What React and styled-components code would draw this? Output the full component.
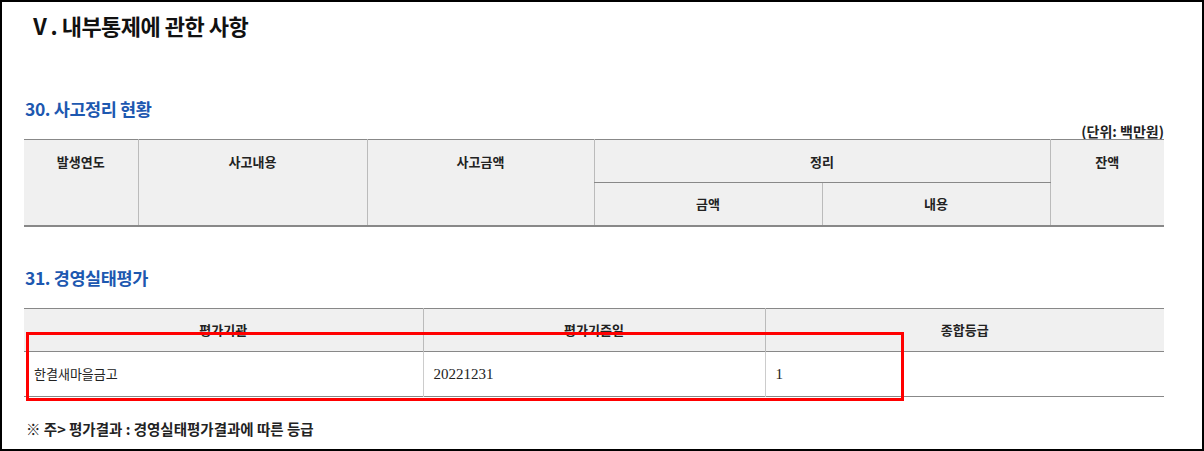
import React from 'react';
import styled, { createGlobalStyle } from 'styled-components';

const GlobalStyle = createGlobalStyle`
  html, body {
    margin: 0;
    padding: 0;
    background: #ffffff;
  }
  body {
    font-family: "Noto Sans CJK KR", "Noto Sans", sans-serif;
    color: #222;
  }
`;

const Frame = styled.div`
  box-sizing: border-box;
  width: 1204px;
  height: 451px;
  border: 2px solid #000;
  padding: 9px 38px 0 22px;
  overflow: hidden;
`;

const PageTitle = styled.h1`
  margin: 0 0 0 5px;
  font-size: 22px;
  line-height: 28px;
  font-weight: 700;
  color: #111;
  letter-spacing: -0.5px;
`;

const SectionTitle = styled.h2`
  margin: ${(p) => p.$top}px 0 0 1px;
  font-size: 17.5px;
  line-height: 24px;
  font-weight: 700;
  color: #1d58b0;
  letter-spacing: -0.4px;
`;

const Unit = styled.div`
  margin-top: 2px;
  text-align: right;
  font-size: 14px;
  line-height: 16px;
  font-weight: 700;
  color: #222;
`;

const TableWrap = styled.div`
  position: relative;
  margin-top: ${(p) => p.$top || 0}px;
`;

const Table = styled.table`
  width: 1140px;
  border-collapse: collapse;
  table-layout: fixed;
  border-top: 1px solid #888;
  border-bottom: ${(p) => p.$bottom || 1}px solid #888;
`;

const Th = styled.th`
  box-sizing: border-box;
  height: ${(p) => p.$h}px;
  padding: ${(p) => p.$pad || 11}px 4px 0;
  vertical-align: top;
  background: #f0f0f0;
  font-size: 13px;
  line-height: 20px;
  font-weight: 700;
  color: #222;
  text-align: center;
  border-left: 1px solid #bbb;
  border-bottom: ${(p) => (p.$split ? '1px solid #888' : 'none')};

  &:first-child {
    border-left: none;
  }
`;

const Td = styled.td`
  box-sizing: border-box;
  height: 45px;
  padding: 0 10px;
  vertical-align: middle;
  font-family: ${(p) =>
    p.$num ? '"Liberation Serif", "Noto Sans CJK KR", serif' : '"Noto Sans CJK KR", sans-serif'};
  font-size: ${(p) => (p.$num ? 15 : 13)}px;
  line-height: 20px;
  color: #222;
  border-left: 1px solid #ccc;
  border-top: 1px solid #888;

  &:first-child {
    border-left: none;
  }
`;

const Highlight = styled.div`
  position: absolute;
  left: 2px;
  top: 24px;
  width: 878px;
  height: 69px;
  box-sizing: border-box;
  border: 3px solid #ff0000;
  pointer-events: none;
`;

const Note = styled.p`
  margin: 23px 0 0 2px;
  font-size: 14.5px;
  line-height: 18px;
  font-weight: 700;
  color: #222;
`;

const accidentCols = [114, 229, 227, 228, 228, 114];
const ratingCols = [399, 342, 399];

const ratings = [{ org: '한결새마을금고', date: '20221231', grade: '1' }];

export default function App() {
  return (
    <>
      <GlobalStyle />
      <Frame>
        <PageTitle>Ⅴ. 내부통제에 관한 사항</PageTitle>

        <SectionTitle $top={58}>30. 사고정리 현황</SectionTitle>
        <Unit>(단위: 백만원)</Unit>
        <TableWrap>
          <Table $bottom={2}>
            <colgroup>
              {accidentCols.map((w, i) => (
                <col key={i} style={{ width: w }} />
              ))}
            </colgroup>
            <thead>
              <tr>
                <Th rowSpan={2} $h={86} $pad={12}>발생연도</Th>
                <Th rowSpan={2} $h={86} $pad={12}>사고내용</Th>
                <Th rowSpan={2} $h={86} $pad={12}>사고금액</Th>
                <Th colSpan={2} $h={43} $pad={12} $split>정리</Th>
                <Th rowSpan={2} $h={86} $pad={12}>잔액</Th>
              </tr>
              <tr>
                <Th $h={43} style={{ borderLeft: '1px solid #bbb' }}>금액</Th>
                <Th $h={43}>내용</Th>
              </tr>
            </thead>
          </Table>
        </TableWrap>

        <SectionTitle $top={39}>31. 경영실태평가</SectionTitle>
        <TableWrap $top={18}>
          <Table>
            <colgroup>
              {ratingCols.map((w, i) => (
                <col key={i} style={{ width: w }} />
              ))}
            </colgroup>
            <thead>
              <tr>
                <Th $h={43}>평가기관</Th>
                <Th $h={43}>평가기준일</Th>
                <Th $h={43}>종합등급</Th>
              </tr>
            </thead>
            <tbody>
              {ratings.map((r) => (
                <tr key={r.org}>
                  <Td>{r.org}</Td>
                  <Td $num>{r.date}</Td>
                  <Td $num>{r.grade}</Td>
                </tr>
              ))}
            </tbody>
          </Table>
          <Highlight />
        </TableWrap>

        <Note>※ 주&gt; 평가결과 : 경영실태평가결과에 따른 등급</Note>
      </Frame>
    </>
  );
}
